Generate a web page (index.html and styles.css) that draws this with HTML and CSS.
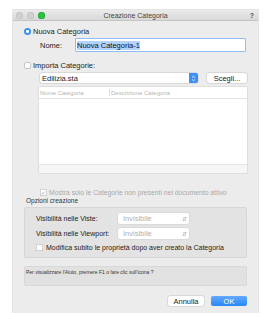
FILE: index.html
```html
<!DOCTYPE html>
<html lang="it">
<head>
    <meta charset="UTF-8">
    <meta name="viewport" content="width=device-width, initial-scale=1.0">
    <title>Creazione Categoria</title>
    <link rel="stylesheet" href="styles.css">
</head>
<body>
    <div class="win">
        <div class="win-bar">
            <div class="lights">
                <span class="dot"></span>
                <span class="dot"></span>
                <span class="dot green"></span>
            </div>
            <div class="win-title">Creazione Categoria</div>
            <div class="win-help">?</div>
        </div>

        <div class="win-body">
            <div class="radio-row">
                <span class="radio on"></span>
                <span>Nuova Categoria</span>
            </div>
            <div class="name-row">
                <label class="name-label">Nome:</label>
                <div class="text-field"><span class="sel">Nuova Categoria-1</span></div>
            </div>

            <div class="radio-row second">
                <span class="radio"></span>
                <span>Importa Categorie:</span>
            </div>
            <div class="file-row">
                <div class="popup">
                    <span>Edilizia.sta</span>
                    <span class="popup-arrows">
                        <svg width="5" height="7" viewBox="0 0 5 7"><path d="M1 2.6L2.5 1.2L4 2.6M1 4.4L2.5 5.8L4 4.4" fill="none" stroke="#fff" stroke-width="0.8"/></svg>
                    </span>
                </div>
                <div class="btn">Scegli...</div>
            </div>

            <div class="table">
                <div class="table-head">
                    <div class="col first">Nome Categoria</div>
                    <div class="col">Descrizione Categoria</div>
                </div>
                <div class="table-rows"></div>
                <div class="table-foot"></div>
            </div>

            <div class="check-row disabled">
                <span class="check ticked">&#10003;</span>
                <span>Mostra solo le Categorie non presenti nel documento attivo</span>
            </div>

            <div class="group-title">Opzioni creazione</div>
            <div class="group">
                <div class="opt-row">
                    <span class="opt-label">Visibilità nelle Viste:</span>
                    <div class="popup off"><span>Invisibile</span><span class="updown">&#8693;</span></div>
                </div>
                <div class="opt-row">
                    <span class="opt-label">Visibilità nelle Viewport:</span>
                    <div class="popup off"><span>Invisibile</span><span class="updown">&#8693;</span></div>
                </div>
                <div class="check-row inner">
                    <span class="check"></span>
                    <span>Modifica subito le proprietà dopo aver creato la Categoria</span>
                </div>
            </div>

            <div class="help-box">Per visualizzare l'Aiuto, premere F1 o fare clic sull'icona ?</div>

            <div class="actions">
                <div class="btn">Annulla</div>
                <div class="btn primary">OK</div>
            </div>
        </div>
    </div>
</body>
</html>
```

FILE: styles.css
```css
body {
    margin: 0;
    padding: 10px 0 0 13px;
    background: #fff;
    font-family: "Liberation Sans", Arial, sans-serif;
    font-size: 7.5px;
    color: #222;
}

.win {
    width: 245px;
    height: 303px;
    background: #ececec;
    box-shadow: 0 0 0 0.5px #c8c8c8;
}

.win-bar {
    height: 11px;
    display: flex;
    align-items: center;
    position: relative;
    background: linear-gradient(#ebebeb, #d8d8d8);
    border-bottom: 1px solid #c4c4c4;
    box-sizing: border-box;
}

.lights {
    display: flex;
    gap: 4px;
    padding-left: 3px;
}

.dot {
    width: 7px;
    height: 7px;
    border-radius: 50%;
    background: #d0d0d0;
    box-shadow: inset 0 0 0 0.5px #bcbcbc;
}

.dot.green {
    background: #2bc23f;
    box-shadow: inset 0 0 0 0.5px #1ea030;
}

.win-title {
    position: absolute;
    left: 0;
    right: 0;
    text-align: center;
    font-size: 7px;
    color: #444;
}

.win-help {
    margin-left: auto;
    padding-right: 4px;
    font-size: 7px;
    font-weight: bold;
    color: #555;
}

.win-body {
    padding: 6px 11px 0 11px;
}

.radio-row {
    display: flex;
    align-items: center;
    gap: 2px;
    height: 9px;
}

.radio-row.second {
    margin-top: 9px;
}

.radio {
    width: 7px;
    height: 7px;
    border-radius: 50%;
    background: #fff;
    box-shadow: inset 0 0 0 0.5px #9c9c9c;
    box-sizing: border-box;
}

.radio.on {
    background: #3b8ff6;
    box-shadow: none;
    display: flex;
    align-items: center;
    justify-content: center;
}

.radio.on::after {
    content: "";
    width: 2.5px;
    height: 2.5px;
    border-radius: 50%;
    background: #fff;
}

.name-row {
    display: flex;
    align-items: center;
    margin-top: 2px;
    height: 14px;
}

.name-label {
    width: 35px;
    padding-left: 16px;
    color: #222;
}

.text-field {
    flex: 1;
    height: 14px;
    box-sizing: border-box;
    background: #fff;
    border: 1.5px solid #8fbdf6;
    border-radius: 1px;
    display: flex;
    align-items: center;
    padding-left: 1px;
    margin-right: 1px;
}

.sel {
    background: #b3d4fc;
    color: #111;
}

.file-row {
    display: flex;
    align-items: center;
    gap: 9px;
    margin: 3px 0 0 16px;
    height: 10px;
}

.popup {
    flex: 1;
    height: 10px;
    background: #fff;
    box-shadow: 0 0 0 0.5px #c6c6c6;
    border-radius: 2px;
    display: flex;
    align-items: center;
    justify-content: space-between;
    padding-left: 2px;
    color: #222;
}

.popup-arrows {
    width: 9px;
    height: 10px;
    background: #3b8ff6;
    border-radius: 0 2px 2px 0;
    display: flex;
    align-items: center;
    justify-content: center;
}

.btn {
    height: 10px;
    width: 40px;
    background: #fff;
    box-shadow: 0 0 0 0.5px #c3c3c3;
    border-radius: 2px;
    display: flex;
    align-items: center;
    justify-content: center;
    color: #222;
}

.table {
    margin: 4px 0 0 15px;
    width: 208px;
    height: 86px;
    background: #fff;
    box-shadow: 0 0 0 0.5px #cfcfcf;
    display: flex;
    flex-direction: column;
}

.table-head {
    display: flex;
    height: 11px;
    border-bottom: 0.5px solid #e2e2e2;
    color: #b5b5b5;
    font-size: 6px;
}

.col {
    display: flex;
    align-items: center;
    padding-left: 1px;
}

.col.first {
    width: 69px;
    border-right: 0.5px solid #dcdcdc;
    margin: 2px 0;
}

.table-rows {
    flex: 1;
}

.table-foot {
    height: 8px;
    background: #f6f6f6;
    border-top: 0.5px solid #e6e6e6;
}

.check-row {
    display: flex;
    align-items: center;
    gap: 2px;
    height: 9px;
}

.check-row.disabled {
    margin: 15px 0 0 16px;
    color: #aaa;
    font-size: 6.8px;
}

.check {
    width: 7px;
    height: 7px;
    box-sizing: border-box;
    background: #fff;
    box-shadow: inset 0 0 0 0.5px #a8a8a8;
    border-radius: 1.5px;
    display: flex;
    align-items: center;
    justify-content: center;
    font-size: 6px;
    color: #999;
}

.group-title {
    margin: 0 0 0 2px;
    height: 8px;
    font-size: 6.5px;
    color: #333;
}

.group {
    margin-top: 2px;
    height: 51px;
    box-sizing: border-box;
    background: #e3e3e3;
    border: 0.5px solid #d6d6d6;
    border-radius: 2px;
    padding: 5px 0 0 11px;
}

.opt-row {
    display: flex;
    align-items: center;
    height: 11px;
    margin-bottom: 4px;
}

.opt-label {
    width: 82px;
    color: #222;
    font-size: 7px;
}

.popup.off {
    flex: none;
    width: 71px;
    height: 11px;
    color: #b0b0b0;
    padding: 0 2px 0 5px;
    box-sizing: border-box;
    box-shadow: 0 0 0 0.5px #d2d2d2;
}

.updown {
    font-size: 6px;
    color: #aaa;
}

.check-row.inner {
    margin-top: 3px;
    gap: 3px;
    font-size: 7px;
    color: #222;
}

.help-box {
    margin-top: 8px;
    height: 20px;
    box-sizing: border-box;
    background: #e1e1e1;
    border: 0.5px solid #d8d8d8;
    border-radius: 2px;
    padding: 2px 1px;
    font-size: 5px;
    color: #333;
}

.actions {
    display: flex;
    justify-content: flex-end;
    gap: 7px;
    margin-top: 10px;
}

.actions .btn {
    width: 36px;
}

.btn.primary {
    background: linear-gradient(#62a9fb, #2a88f5);
    box-shadow: none;
    color: #fff;
}
```
